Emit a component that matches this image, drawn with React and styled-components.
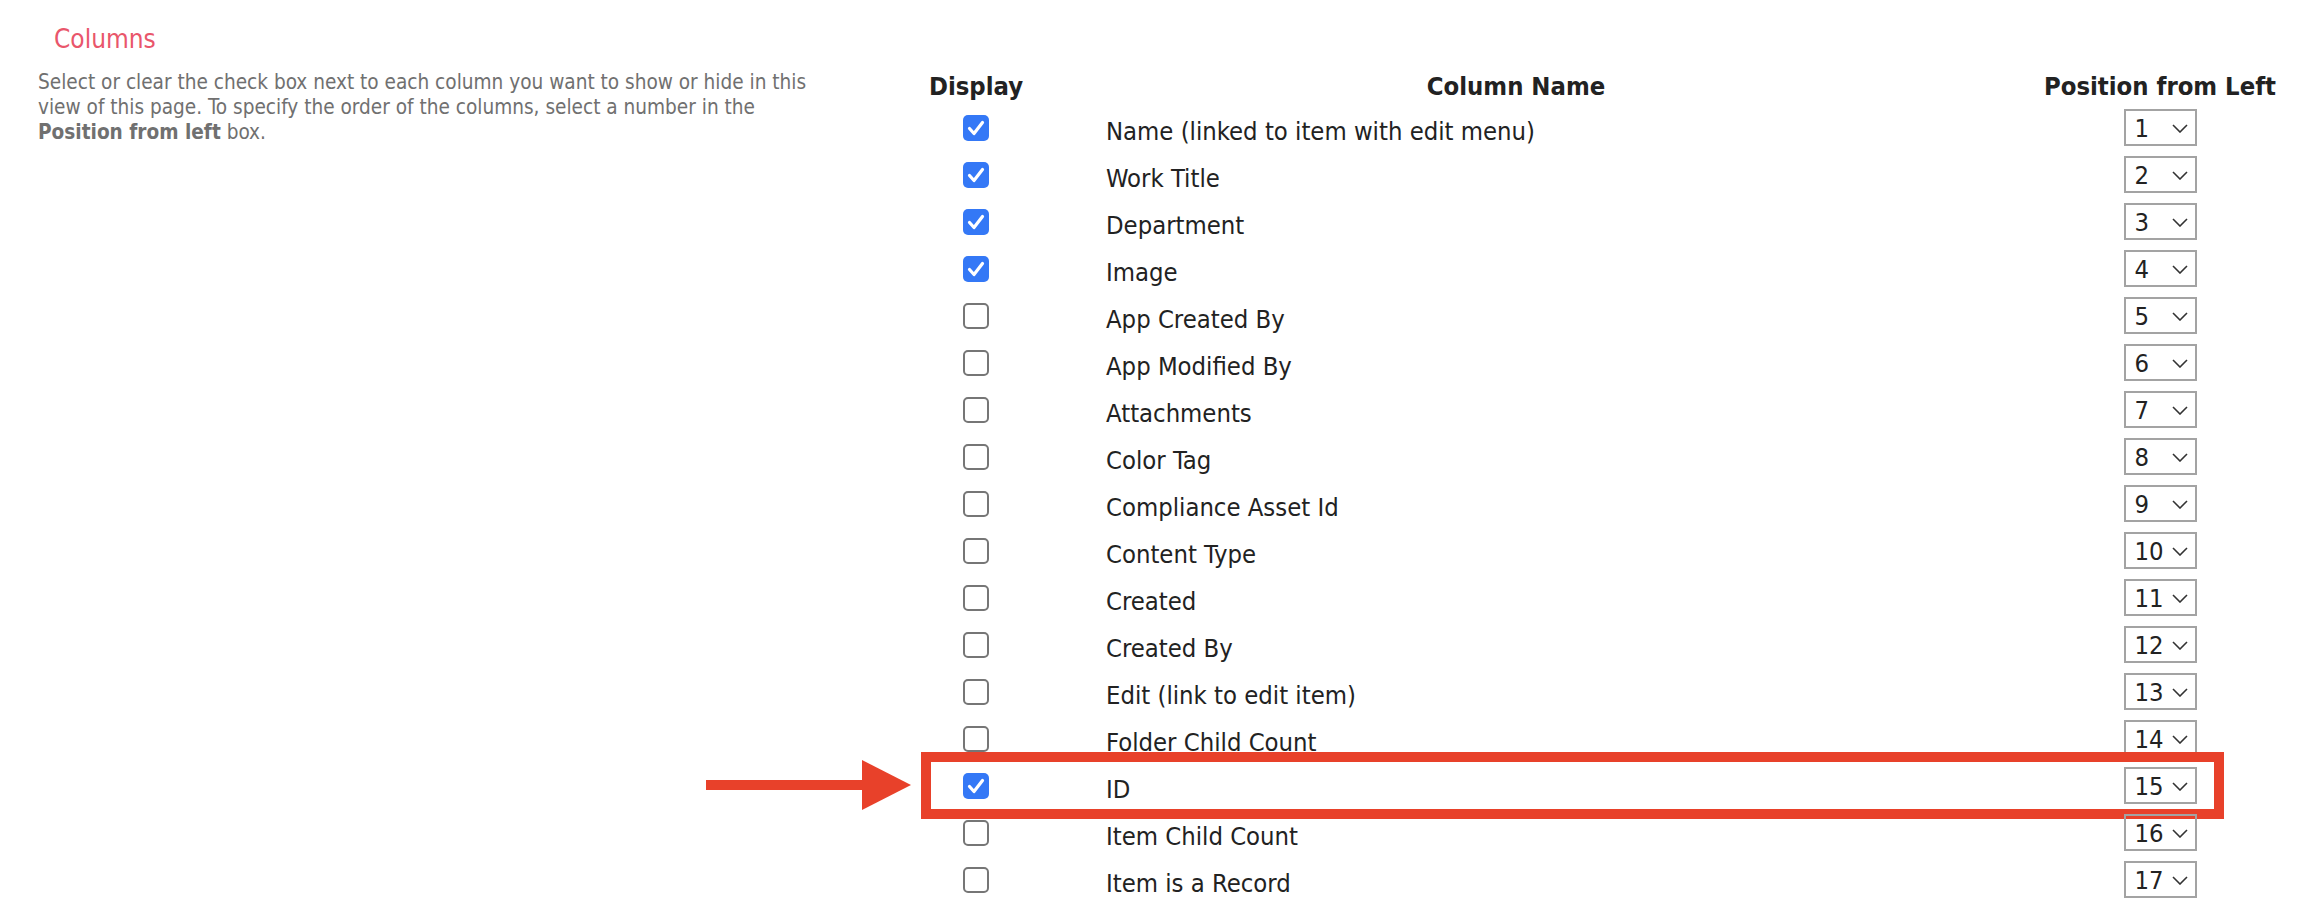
import React from 'react'
import styled, { createGlobalStyle, css } from 'styled-components'

const GlobalStyle = createGlobalStyle`
  body {
    margin: 0;
    background: #fff;
    font-family: 'DejaVu Sans Condensed', 'Liberation Sans', sans-serif;
  }
`

const columns = [
  { name: 'Name (linked to item with edit menu)', checked: true },
  { name: 'Work Title', checked: true },
  { name: 'Department', checked: true },
  { name: 'Image', checked: true },
  { name: 'App Created By' },
  { name: 'App Modified By' },
  { name: 'Attachments' },
  { name: 'Color Tag' },
  { name: 'Compliance Asset Id' },
  { name: 'Content Type' },
  { name: 'Created' },
  { name: 'Created By' },
  { name: 'Edit (link to edit item)' },
  { name: 'Folder Child Count' },
  { name: 'ID', checked: true, marked: true },
  { name: 'Item Child Count' },
  { name: 'Item is a Record' },
]

const gridCols = css`
  display: grid;
  grid-template-columns: 144px 992px 240px;
`

const Page = styled.div`
  display: flex;
  align-items: flex-start;
`

const Intro = styled.div`
  width: 904px;
  flex-shrink: 0;
  box-sizing: border-box;
  padding-left: 38px;
`

const Title = styled.h2`
  margin: 24px 0 0 16px;
  font-size: 26px;
  font-weight: 400;
  line-height: normal;
  color: #e9566b;
`

const Description = styled.p`
  width: 790px;
  margin: 16px 0 0;
  font-size: 20.6px;
  line-height: 25px;
  color: #707070;

  b {
    font-weight: 700;
  }
`

const Table = styled.div`
  margin-top: 71px;
  width: 1376px;
  color: #222;
  font-size: 25.4px;
`

const HeadRow = styled.div`
  ${gridCols};
`

const HeadCell = styled.div`
  font-weight: 700;
  line-height: normal;
  padding-bottom: 3px;
  text-align: center;
  ${p => p.shift && `padding-right: ${p.shift}px;`}
`

const Row = styled.div`
  ${gridCols};
  position: relative;
  height: 47px;
  align-items: center;
`

const Cell = styled.div`
  display: flex;
  justify-content: ${p => (p.center ? 'center' : 'flex-start')};
  ${p => p.indent && `padding: 7px 0 0 ${p.indent}px;`}
  line-height: normal;
`

const Box = styled.span`
  width: 26px;
  height: 26px;
  box-sizing: border-box;
  border-radius: 5px;
  display: inline-flex;
  ${p =>
    p.checked
      ? `background: #3478f6; border: none;`
      : `background: #fff; border: 2px solid #767676;`}
`

const Select = styled.div`
  width: 73px;
  height: 37px;
  box-sizing: border-box;
  border: 2px solid #a3a3a3;
  display: flex;
  align-items: center;
  padding-left: 9px;
  font-size: 25.4px;
  color: #222;
  position: relative;
`

const Chevron = styled.svg`
  position: absolute;
  left: 46px;
  top: 13px;
`

const Highlight = styled.div`
  position: absolute;
  left: 17px;
  top: -10px;
  width: 1303px;
  height: 67px;
  box-sizing: border-box;
  border: 10px solid #e8412a;
  pointer-events: none;
`

const Arrow = styled.svg`
  position: absolute;
  left: -198px;
  top: -2px;
`

const Checkbox = ({ checked }) => (
  <Box checked={checked}>
    {checked && (
      <svg width='26' height='26' viewBox='0 0 26 26'>
        <polyline points='6.5,13.5 11,18.5 19.5,7.5' fill='none' stroke='#fff'
          strokeWidth='3.2' strokeLinecap='round' strokeLinejoin='round' />
      </svg>
    )}
  </Box>
)

const Position = ({ value }) => (
  <Select>
    {value}
    <Chevron width='16' height='9' viewBox='0 0 16 9'>
      <polyline points='1,1 8,8 15,1' fill='none' stroke='#333' strokeWidth='1.6' />
    </Chevron>
  </Select>
)

export default function App() {
  return (
    <Page>
      <GlobalStyle />
      <Intro>
        <Title>Columns</Title>
        <Description>
          Select or clear the check box next to each column you want to show or hide in this
          view of this page. To specify the order of the columns, select a number in the{' '}
          <b>Position from left</b> box.
        </Description>
      </Intro>
      <Table>
        <HeadRow>
          <HeadCell>Display</HeadCell>
          <HeadCell shift={56}>Column Name</HeadCell>
          <HeadCell>Position from Left</HeadCell>
        </HeadRow>
        {columns.map((c, i) => (
          <Row key={c.name}>
            <Cell center><Checkbox checked={c.checked} /></Cell>
            <Cell indent={58}>{c.name}</Cell>
            <Cell center><Position value={i + 1} /></Cell>
            {c.marked && (
              <>
                <Highlight />
                <Arrow width='205' height='50' viewBox='0 0 205 50'>
                  <rect x='0' y='20' width='157' height='10' fill='#e8412a' />
                  <polygon points='156,0 205,25 156,50' fill='#e8412a' />
                </Arrow>
              </>
            )}
          </Row>
        ))}
      </Table>
    </Page>
  )
}
